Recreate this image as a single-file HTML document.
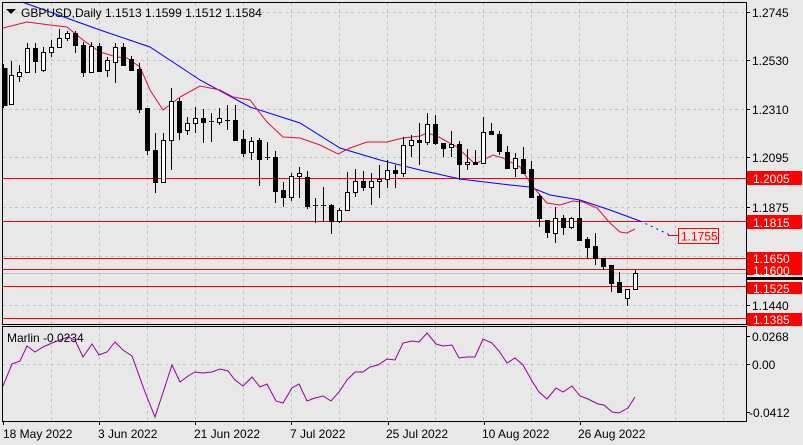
<!DOCTYPE html>
<html><head><meta charset="utf-8"><style>
html,body{margin:0;padding:0;background:#e8e8e8;}
svg{display:block;font-family:"Liberation Sans",Tahoma,sans-serif;}
.ax{font-size:12px;fill:#000;}
.lb{font-size:12px;fill:#fff;}
</style></head><body>
<svg id="s" width="803" height="445" viewBox="0 0 803 445" xmlns="http://www.w3.org/2000/svg">
<rect width="803" height="445" fill="#e8e8e8"/>
<g id="grid" stroke="#c4c4c4" stroke-dasharray="3,3" stroke-width="1"></g>
<g stroke="#ff0000" stroke-width="1">
<line x1="3" y1="178.5" x2="746" y2="178.5"/>
<line x1="3" y1="221.5" x2="746" y2="221.5"/>
<line x1="3" y1="258.5" x2="746" y2="258.5"/>
<line x1="3" y1="269.5" x2="746" y2="269.5"/>
<line x1="3" y1="286.5" x2="746" y2="286.5"/>
<line x1="3" y1="318.5" x2="746" y2="318.5"/>
</g>
<line x1="3" y1="273.5" x2="746" y2="273.5" stroke="#c0c0c0"/>
<g id="ma"></g>
<g id="cd"></g>
<line x1="668" y1="235.5" x2="678" y2="235.5" stroke="#ff0000"/>
<rect x="678.5" y="228.5" width="40" height="15" fill="none" stroke="#ff0000"/>
<text x="681" y="240.5" font-size="12" fill="#ff0000">1.1755</text>
<rect x="2.5" y="2.5" width="744" height="322" fill="none" stroke="#000"/>
<rect x="2.5" y="326.5" width="744" height="95" fill="none" stroke="#000"/>
<polygon points="6,9 16,9 11,14" fill="#000"/>
<text x="21" y="17" class="ax">GBPUSD,Daily  1.1513 1.1599 1.1512 1.1584</text>
<text x="7" y="342" class="ax">Marlin -0.0234</text>
<g stroke="#000">
<line x1="746" y1="12.5" x2="750" y2="12.5"/><line x1="746" y1="60.5" x2="750" y2="60.5"/>
<line x1="746" y1="109.5" x2="750" y2="109.5"/><line x1="746" y1="157.5" x2="750" y2="157.5"/>
<line x1="746" y1="207.5" x2="750" y2="207.5"/><line x1="746" y1="305.5" x2="750" y2="305.5"/>
<line x1="746" y1="336.5" x2="750" y2="336.5"/><line x1="746" y1="364.5" x2="750" y2="364.5"/>
<line x1="746" y1="412.5" x2="750" y2="412.5"/>
</g>
<text x="752" y="17" class="ax">1.2745</text>
<text x="752" y="65" class="ax">1.2530</text>
<text x="752" y="114" class="ax">1.2310</text>
<text x="752" y="162" class="ax">1.2095</text>
<text x="752" y="212" class="ax">1.1875</text>
<text x="752" y="310" class="ax">1.1440</text>
<rect x="747" y="277" width="56" height="3" fill="#000"/>
<rect x="747" y="171" width="55" height="14" fill="#ff0000"/><text x="753" y="183" class="lb">1.2005</text>
<rect x="747" y="215" width="55" height="14" fill="#ff0000"/><text x="753" y="227" class="lb">1.1815</text>
<rect x="747" y="252" width="55" height="13" fill="#ff0000"/><text x="753" y="263" class="lb">1.1650</text>
<rect x="747" y="264" width="55" height="11" fill="#ff0000"/><text x="753" y="275" class="lb">1.1600</text>
<rect x="747" y="282" width="55" height="12" fill="#ff0000"/><text x="753" y="293" class="lb">1.1525</text>
<rect x="747" y="313" width="55" height="13" fill="#ff0000"/><text x="753" y="324" class="lb">1.1385</text>
<text x="752" y="341" class="ax">0.0268</text>
<text x="752" y="369" class="ax">0.00</text>
<text x="749" y="417" class="ax">-0.0412</text>
<g stroke="#000">
<line x1="3.5" y1="421" x2="3.5" y2="425"/><line x1="99.5" y1="421" x2="99.5" y2="425"/>
<line x1="195.5" y1="421" x2="195.5" y2="425"/><line x1="291.5" y1="421" x2="291.5" y2="425"/>
<line x1="388.5" y1="421" x2="388.5" y2="425"/><line x1="484.5" y1="421" x2="484.5" y2="425"/>
<line x1="580.5" y1="421" x2="580.5" y2="425"/>
</g>
<text x="3" y="438" class="ax">18 May 2022</text>
<text x="98" y="438" class="ax">3 Jun 2022</text>
<text x="194" y="438" class="ax">21 Jun 2022</text>
<text x="290" y="438" class="ax">7 Jul 2022</text>
<text x="386" y="438" class="ax">25 Jul 2022</text>
<text x="482" y="438" class="ax">10 Aug 2022</text>
<text x="578" y="438" class="ax">26 Aug 2022</text>
</svg>
<script>
var NS="http://www.w3.org/2000/svg";
function el(p,t,a){var e=document.createElementNS(NS,t);for(var k in a)e.setAttribute(k,a[k]);p.appendChild(e);return e;}
var g=document.getElementById('grid');
for(var x=51;x<746;x+=48){el(g,'line',{x1:x+.5,y1:3,x2:x+.5,y2:324});el(g,'line',{x1:x+.5,y1:327,x2:x+.5,y2:421});}
[12,60,109,157,207,256,305].forEach(function(y){el(g,'line',{x1:3,y1:y+.5,x2:746,y2:y+.5});});
el(g,'line',{x1:3,y1:364.5,x2:746,y2:364.5});
var D=[[68,105,64,108],[104,75,61,104],[76,72,65,82],[72,48,43,72],[48,61,43,73],[70,52,47,72],[52,47,40,57],[47,38,29,47],[38,33,31,41],[33,45,31,53],[45,72,42,77],[72,46,42,73],[46,71,43,72],[70,60,57,77],[62,47,43,83],[47,65,43,65],[59,70,56,70],[69,109,63,113],[108,150,108,155],[150,182,133,193],[182,140,133,182],[140,101,88,170],[101,132,98,140],[130,123,117,135],[123,118,107,133],[118,122,109,143],[121,121,113,142],[122,118,108,125],[120,120,105,130],[120,140,105,140],[139,153,130,157],[152,141,137,160],[140,159,138,186],[157,157,142,160],[157,191,151,203],[190,197,182,207],[197,176,173,201],[176,173,167,198],[177,206,171,209],[205,205,198,223],[205,205,187,222],[205,221,204,234],[221,210,208,223],[210,192,172,210],[192,181,169,197],[181,187,171,191],[187,181,173,205],[181,179,165,198],[179,170,160,188],[170,173,165,188],[173,145,137,177],[145,140,135,157],[140,142,123,165],[142,124,113,145],[124,143,115,145],[143,148,143,157],[147,144,131,157],[144,164,141,180],[164,162,149,170],[162,164,150,165],[163,132,117,163],[131,134,123,134],[134,151,131,155],[152,168,146,168],[168,158,153,177],[159,173,147,174],[169,197,161,197],[196,218,194,227],[220,232,220,238],[233,218,207,243],[218,227,215,235],[227,218,217,229],[218,240,200,240],[239,247,237,258],[246,258,233,265],[258,266,258,270],[265,283,265,292],[282,292,272,293],[298,289,289,306],[289,273,270,289]];
var c=document.getElementById('cd');
D.forEach(function(d,i){var cx=3.5+8*i;
 el(c,'line',{x1:cx,y1:d[2],x2:cx,y2:d[3],stroke:'#000'});
 var t=Math.min(d[0],d[1]),b=Math.max(d[0],d[1]);
 if(b-t<1){el(c,'line',{x1:cx-2.5,y1:t+.5,x2:cx+2.5,y2:t+.5,stroke:'#000'});return;}
 var bear=d[1]>d[0];
 el(c,'rect',{x:Math.max(cx-2,3),y:t+.5,width:4,height:b-t,fill:bear?'#000':'#fff',stroke:'#000'});
});
var m=document.getElementById('ma');
function pl(pts,col,extra){var a={points:pts.map(function(p){return p.join(',')}).join(' '),fill:'none',stroke:col,'stroke-width':1};for(var k in extra)a[k]=extra[k];el(m,'polyline',a);}
pl([[22,2],[50,12],[100,30],[150,47],[200,80],[250,107],[300,123],[340,148],[380,160],[420,170],[460,179],[510,185],[530,187],[550,195],[580,200],[610,210],[640,221]],'#0000ff');
pl([[640,221],[670,235]],'#0000ff',{'stroke-dasharray':'2,4'});
pl([[3,28],[27,22],[50,25],[67,27],[83,40],[100,52],[117,57],[127,58],[140,67],[150,90],[163,110],[180,97],[200,86],[220,90],[233,97],[250,100],[267,122],[283,137],[300,138],[320,145],[338,154],[350,148],[367,142],[387,142],[403,138],[420,136],[427,133],[437,136],[457,147],[475,164],[493,155],[503,158],[520,167],[533,187],[547,203],[560,205],[573,201],[583,202],[597,208],[610,223],[620,232],[627,233],[635,229]],'#e0103a');
pl([[3,386],[12,364],[20,361],[27,346],[35,352],[43,347],[52,343],[68,337],[75,340],[83,357],[92,344],[99,355],[107,352],[115,342],[123,350],[132,356],[145,392],[155,417],[172,365],[180,382],[188,376],[195,372],[203,373],[212,372],[220,369],[228,371],[235,380],[243,386],[252,377],[260,387],[267,384],[276,401],[283,403],[292,388],[299,384],[307,401],[315,398],[323,396],[331,401],[339,392],[347,380],[355,372],[363,372],[370,367],[378,365],[387,359],[395,360],[403,343],[412,341],[419,342],[427,333],[436,344],[443,346],[452,345],[459,358],[467,357],[475,357],[483,339],[492,343],[499,351],[507,363],[515,358],[523,365],[532,381],[539,392],[547,399],[556,388],[563,392],[572,386],[580,396],[588,399],[598,404],[604,405],[612,412],[619,413],[628,408],[635,397]],'#9400a0');
</script>
</body></html>
